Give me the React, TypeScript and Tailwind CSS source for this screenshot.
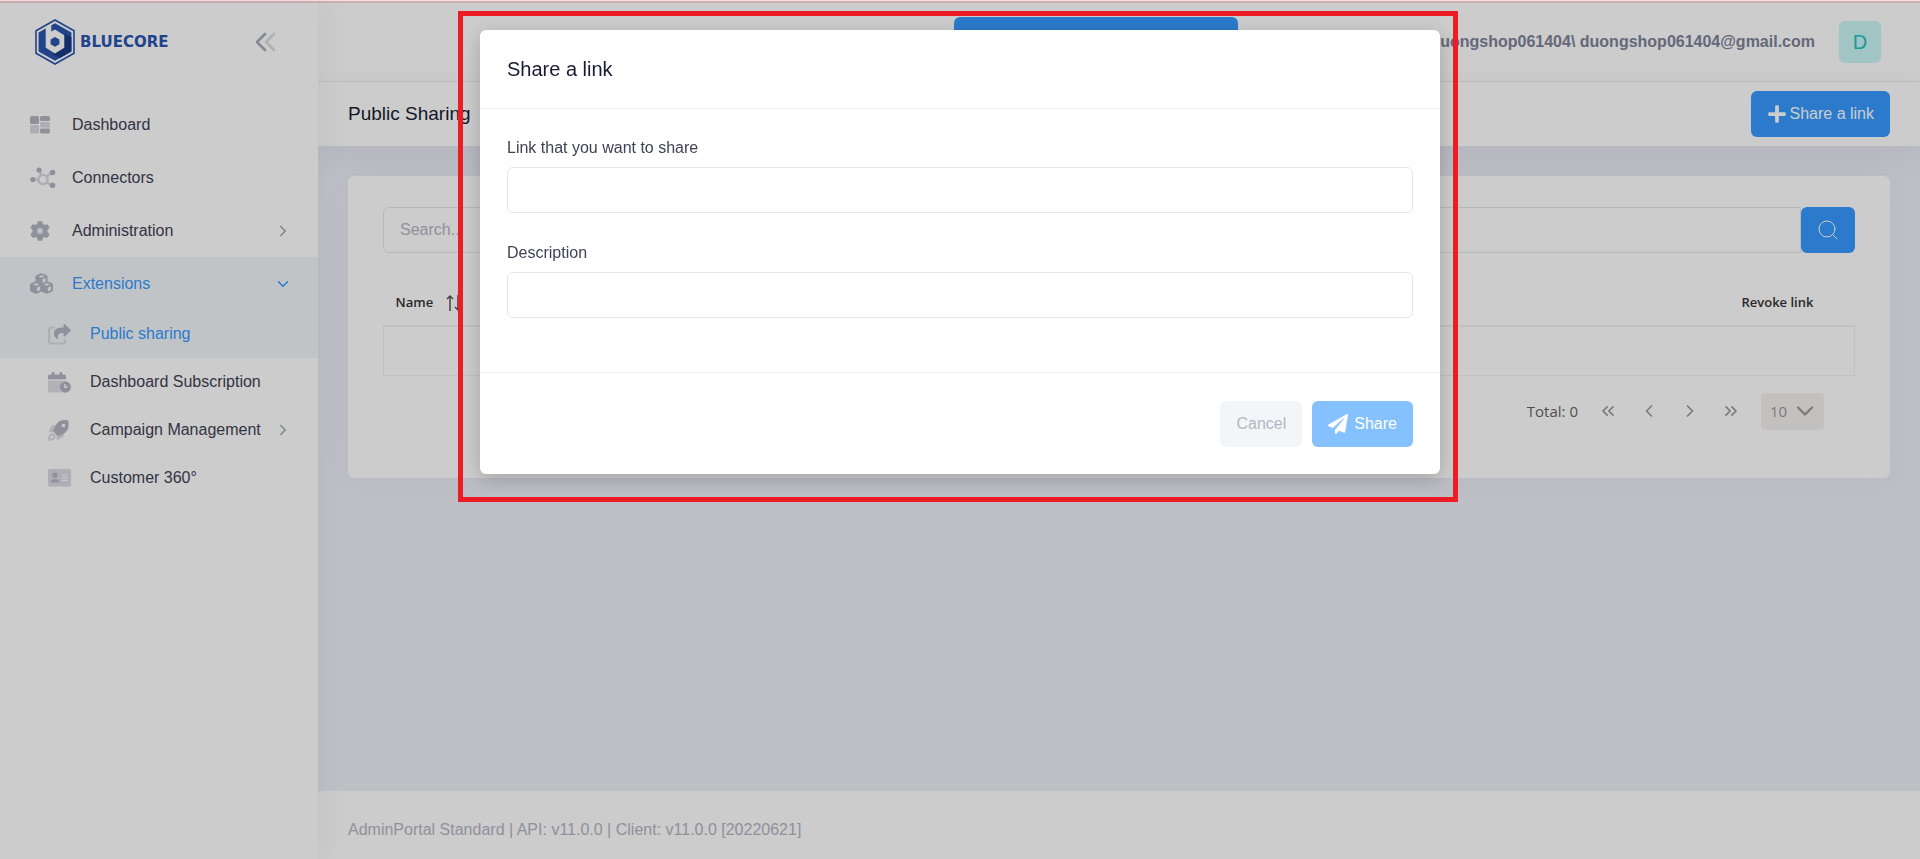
import React from 'react';
import {
  ChevronDown,
  ChevronLeft,
  ChevronRight,
  ChevronsLeft,
  ChevronsRight,
  Search,
} from 'lucide-react';
import { FaPaperPlane, FaPlus } from 'react-icons/fa';
import { FaCubes, FaGear } from 'react-icons/fa6';

const Logo: React.FC = () => (
  <a href="#" className="flex items-center gap-[5px] text-[#2a55b0]">
    <svg viewBox="0 0 40 46" className="h-[46px] w-10">
      <path d="M20 1 39 11.8v22.4L20 45 1 34.2V11.8Z" fill="none" stroke="#2a55ae" strokeWidth="1.6" />
      <path d="M20 4.200 36.400 13.600v18.800L20 41.800 3.600 32.400V13.600Z" fill="#2854ad" />
      <path d="m29 15 7.400 3v14.400L25 39l-8-4 12-7Z" fill="#183a85" />
      <path d="m10.700 8.600 5.600-3.200v7.200l3.700-2 9.300 5.600v12.600L20 34.600l-9.300-5.800Z" fill="#fff" />
      <path d="m20 18 4.400 2.500v4.800L20 27.800l-4.400-2.500v-4.800Z" fill="#2854ad" />
    </svg>
    <span className="font-['DejaVu_Sans',sans-serif] text-[15px] font-bold">BLUECORE</span>
  </a>
);

const DashboardIcon: React.FC = () => (
  <svg viewBox="0 0 20 18" className="h-[18px] w-5" fill="currentColor">
    <rect width="9" height="8" rx="1.5" />
    <rect x="10" width="10" height="5" rx="1.5" />
    <rect x="10" y="12.5" width="10" height="5" rx="1.5" />
    <g opacity=".5">
      <rect y="9" width="9" height="8.5" rx="1.5" />
      <rect x="10" y="6" width="10" height="5.5" rx="1.5" />
    </g>
  </svg>
);

const ConnectorsIcon: React.FC = () => (
  <svg viewBox="0 0 26 22" className="h-[22px] w-[26px]" fill="currentColor">
    <g opacity=".5" fill="none" stroke="currentColor" strokeWidth="2.4">
      <circle cx="13" cy="12.5" r="4.6" />
      <path d="m9 3 2.200 5.200M5 12.500h3.500M16.500 9.500 21 6.500M16.500 15.500l4 2" />
    </g>
    <circle cx="9" cy="3" r="2.6" />
    <circle cx="2.800" cy="12.500" r="2.6" />
    <circle cx="22.500" cy="5.500" r="2.8" />
    <circle cx="22.500" cy="18.300" r="2.8" />
  </svg>
);

const GearIcon: React.FC = () => (
  <span className="relative inline-flex">
    <FaGear className="size-5" />
    <svg viewBox="0 0 20 20" className="absolute inset-0 size-5">
      <circle cx="10" cy="10" r="3.2" fill="#dcdce3" />
      <circle cx="10" cy="10" r="1.4" fill="#fff" />
    </svg>
  </span>
);

const CubesIcon: React.FC = () => <FaCubes className="size-[23px]" />;

const ShareIcon: React.FC = () => (
  <svg viewBox="0 0 23 21" className="h-[21px] w-[23px]">
    <path
      d="M6.500 3.500H2.500A1.300 1.300 0 0 0 1.200 4.800v13.400a1.300 1.300 0 0 0 1.300 1.300h13a1.300 1.300 0 0 0 1.300-1.300V15"
      fill="none"
      stroke="currentColor"
      strokeWidth="2.2"
      opacity=".4"
    />
    <path
      d="M15.500.9c0-.8.900-1.100 1.400-.6l5.700 5.400c.4.400.4.900 0 1.300l-5.700 5.400c-.5.500-1.400.1-1.400-.6V9c-4.500 0-6.400 1.300-5.300 5.600.1.500-.5.900-.9.600C7.500 14 5.900 12 5.900 9.600c0-4.900 4.300-6 9.600-6Z"
      fill="currentColor"
    />
  </svg>
);

const CalendarIcon: React.FC = () => (
  <svg viewBox="0 0 23 21" className="h-[21px] w-[23px]" fill="currentColor">
    <path
      d="M0 8.500h18v0a6.600 6.600 0 0 0-6.700 6.500 6.600 6.600 0 0 0 2.200 5.500H1.800A1.800 1.800 0 0 1 0 18.700Z"
      opacity=".45"
    />
    <path d="M0 7.300V4.400c0-1 .8-1.800 1.800-1.800h2V.8c0-.5.300-.8.800-.8h1c.5 0 .8.300.8.800v1.800h5.200V.8c0-.5.300-.8.800-.8h1c.5 0 .8.300.8.800v1.800h2c1 0 1.800.8 1.800 1.800v2.900Z" />
    <path
      fillRule="evenodd"
      d="M17.200 9.300a5.700 5.700 0 1 0 0 11.400 5.700 5.700 0 0 0 0-11.400Zm-.9 2.800h1.400v2.500h1.900v1.400h-3.300Z"
    />
  </svg>
);

const RocketIcon: React.FC = () => (
  <svg viewBox="0 0 21 21" className="size-[21px]" fill="currentColor">
    <g opacity=".45">
      <path d="M8.300 5.200H4.800c-.6 0-1 .3-1.300.8L.7 11.200c-.3.500.1 1.100.7 1.100h4Z" />
      <path d="M15.800 12.200v3.700c0 .6-.3 1-.8 1.300l-5.100 2.700c-.6.300-1.200-.1-1.200-.7v-4Z" />
      <path
        fillRule="evenodd"
        d="M4 13.200c-2.700 0-4 3-3.900 7.500 4.500.1 7.600-1.200 7.600-3.900A3.700 3.700 0 0 0 4 13.200Zm.2 2.200c1 .1 1.500 1 1.100 1.800-.4.800-1.500 1.200-3 1.300 0-1.600.700-3.200 1.900-3.100Z"
      />
    </g>
    <path
      fillRule="evenodd"
      d="M20.300.9c-.1-.3-.3-.5-.6-.6-5.200-1-8.700.3-11.300 3.900-1.600 2.100-2.800 5.200-3.200 7.300l4.400 4.400c2.200-.4 5.200-1.600 7.400-3.200C20.600 10 21.200 6.100 20.300.9ZM15.500 7.300a1.800 1.800 0 1 1 0-3.600 1.800 1.800 0 0 1 0 3.600Z"
    />
  </svg>
);

const IdCardIcon: React.FC = () => (
  <svg viewBox="0 0 23 18" className="h-[18px] w-[23px]" fill="currentColor">
    <rect width="23" height="17.500" rx="2" opacity=".5" />
    <circle cx="7" cy="6.300" r="2.7" />
    <path d="M2.800 13.400c0-2 1.300-3.200 3-3.200h2.400c1.700 0 3 1.200 3 3.200Z" />
    <path d="M14 6h6M14 8.700h6M14 11.400h6" stroke="#fff" strokeWidth="1.1" />
  </svg>
);

interface MenuItem {
  label: string;
  icon: React.FC;
  arrow?: 'right' | 'down';
  active?: boolean;
}

const mainMenu: MenuItem[] = [
  { label: 'Dashboard', icon: DashboardIcon },
  { label: 'Connectors', icon: ConnectorsIcon },
  { label: 'Administration', icon: GearIcon, arrow: 'right' },
  { label: 'Extensions', icon: CubesIcon, arrow: 'down', active: true },
];

const subMenu: MenuItem[] = [
  { label: 'Public sharing', icon: ShareIcon, active: true },
  { label: 'Dashboard Subscription', icon: CalendarIcon },
  { label: 'Campaign Management', icon: RocketIcon, arrow: 'right' },
  { label: 'Customer 360°', icon: IdCardIcon },
];

const MenuRow: React.FC<{ item: MenuItem; sub?: boolean }> = ({ item, sub }) => (
  <li>
    <a
      href="#"
      className={`flex items-center pr-[26px] ${sub ? 'h-12 pl-12' : 'h-[53px] pl-[30px]'} ${
        item.active ? 'bg-[#f1f6f9] text-[#3699ff]' : 'text-[#3f4254]'
      }`}
    >
      <span className="flex w-[42px] text-[#b5b5c3]">
        <item.icon />
      </span>
      <span className="flex-1 whitespace-nowrap">{item.label}</span>
      {item.arrow === 'right' && <ChevronRight className="size-[18px] text-[#a1a5b7]" />}
      {item.arrow === 'down' && <ChevronDown className="size-[18px]" />}
    </a>
  </li>
);

const Sidebar: React.FC = () => (
  <aside className="z-10 flex w-[318px] shrink-0 flex-col bg-white shadow-[0_0_28px_rgba(82,63,105,0.08)]">
    <div className="flex h-[78px] items-center justify-between pr-10 pl-[35px]">
      <Logo />
      <button type="button" aria-label="Collapse menu" className="text-[#a9abbd]">
        <svg viewBox="0 0 24 24" className="size-6" fill="none" stroke="currentColor" strokeWidth="2.6" strokeLinecap="round" strokeLinejoin="round">
          <path d="m11 4-8 8 8 8" />
          <path d="m20 4-8 8 8 8" opacity=".4" />
        </svg>
      </button>
    </div>
    <ul className="mt-[17px]">
      {mainMenu.map((item) => (
        <MenuRow key={item.label} item={item} />
      ))}
    </ul>
    <ul>
      {subMenu.map((item) => (
        <MenuRow key={item.label} item={item} sub />
      ))}
    </ul>
  </aside>
);

const Topbar: React.FC = () => (
  <header className="flex h-[79px] items-start justify-end border-b border-[#ebedf3] bg-white pr-[39px]">
    <button
      type="button"
      aria-label="Open workspace"
      className="mt-[14px] mr-auto ml-[636px] h-[46px] w-[284px] rounded-md bg-[#3699ff]"
    />
    <div className="mt-[18px] flex items-center gap-6">
      <span className="font-bold text-[#7e8299]">duongshop061404\ duongshop061404@gmail.com</span>
      <span className="flex size-[42px] items-center justify-center rounded-md bg-[#c9f7f5] text-xl text-[#1bc5bd]">
        D
      </span>
    </div>
  </header>
);

const Subheader: React.FC = () => (
  <div className="flex h-16 items-center justify-between bg-white px-[30px] shadow-[0_10px_30px_rgba(82,63,105,0.08)]">
    <h1 className="text-[19px] text-[#181c32]">Public Sharing</h1>
    <button
      type="button"
      className="flex h-[46px] items-center gap-[3px] rounded-md bg-[#3699ff] px-4 text-white"
    >
      <FaPlus className="size-5" />
      Share a link
    </button>
  </div>
);

const Pagination: React.FC = () => (
  <div className="mt-[17px] flex items-center justify-end pr-[31px] text-[#999]">
    <span className="mr-5 font-['Open_Sans',sans-serif] text-[15px] text-[#666]">Total: 0</span>
    <div className="flex items-center gap-[21px]">
      <button type="button" aria-label="First page"><ChevronsLeft className="size-5" /></button>
      <button type="button" aria-label="Previous page"><ChevronLeft className="size-5" /></button>
      <button type="button" aria-label="Next page"><ChevronRight className="size-5" /></button>
      <button type="button" aria-label="Last page"><ChevronsRight className="size-5" /></button>
    </div>
    <div className="relative ml-5">
      <select
        aria-label="Rows per page"
        className="h-[37px] w-[63px] appearance-none rounded-sm bg-[#f3f2f0] pl-[9px] font-['Open_Sans',sans-serif] text-[15px]"
      >
        <option>10</option>
      </select>
      <ChevronDown className="pointer-events-none absolute top-1 right-[5px] size-7" />
    </div>
  </div>
);

const LinksCard: React.FC = () => (
  <section className="rounded-md bg-white px-[35px] pt-[31px] pb-12 shadow-[0_0_30px_rgba(82,63,105,0.05)]">
    <form className="flex">
      <input
        type="text"
        aria-label="Search"
        placeholder="Search..."
        className="h-[46px] flex-1 rounded-l-md border border-[#e4e6ef] px-4 placeholder:text-[#b5b5c3]"
      />
      <button
        type="button"
        aria-label="Run search"
        className="flex h-[46px] w-[54px] items-center justify-center rounded-md bg-[#3699ff] text-white"
      >
        <Search className="size-6" strokeWidth={1} />
      </button>
    </form>

    <table className="mt-7 w-full font-['Open_Sans',sans-serif] text-[13px]">
      <thead>
        <tr className="h-[45px] text-left text-[#333]">
          <th className="pl-3 font-semibold">
            <span className="flex items-center gap-3">
              Name
              <svg viewBox="0 0 20 18" className="h-[18px] w-5" fill="none" stroke="#555" strokeWidth="1.5">
                <path d="M5 17V2M2 5 5 2 8 5M13 1v15M10 13l3 3 3-3" />
              </svg>
            </span>
          </th>
          <th className="w-[113px] font-semibold">Revoke link</th>
        </tr>
      </thead>
      <tbody>
        <tr className="h-[49px] border border-t-2 border-[#f0f0f2]">
          <td colSpan={2} />
        </tr>
      </tbody>
    </table>

    <Pagination />
  </section>
);

const ShareDialog: React.FC = () => (
  <div className="fixed inset-x-0 top-px bottom-0 z-20 flex items-start justify-center bg-black/20 pt-[29px]">
    <div className="relative w-full max-w-[960px]">
      <div
        role="dialog"
        aria-labelledby="share-title"
        className="rounded-md bg-white shadow-[0_5px_20px_rgba(0,0,0,0.2)]"
      >
        <h2
          id="share-title"
          className="flex h-[79px] items-center border-b border-[#ebedf3] px-[27px] text-xl text-[#181c32]"
        >
          Share a link
        </h2>

        <div className="flex flex-col gap-7 px-[27px] pt-[27px] pb-[54px]">
          <div className="flex flex-col gap-[7px]">
            <label htmlFor="link" className="text-[#3f4254]">Link that you want to share</label>
            <input id="link" type="text" className="h-[46px] rounded-md border border-[#e4e6ef] px-4" />
          </div>
          <div className="flex flex-col gap-[7px]">
            <label htmlFor="description" className="text-[#3f4254]">Description</label>
            <input id="description" type="text" className="h-[46px] rounded-md border border-[#e4e6ef] px-4" />
          </div>
        </div>

        <div className="flex justify-end gap-[10px] border-t border-[#ebedf3] px-[27px] pt-7 pb-[27px]">
          <button type="button" className="h-[46px] rounded-md bg-[#f3f6f9] px-4 text-[#b5b5c3]">
            Cancel
          </button>
          <button
            type="button"
            className="flex h-[46px] items-center gap-[6px] rounded-md bg-[#86c1ff] px-4 text-white"
          >
            <FaPaperPlane className="size-5" />
            Share
          </button>
        </div>
      </div>

      {/* Highlight frame around the dialog */}
      <div className="pointer-events-none absolute -top-[19px] -right-[18px] -bottom-7 -left-[22px] border-5 border-[#ed1c24]" />
    </div>
  </div>
);

const App: React.FC = () => (
  <div className="flex min-h-screen border-t-3 border-[#fbdde0] bg-[#eef0f8] font-['Liberation_Sans',Arial,sans-serif] text-base">
    <Sidebar />
    <div className="flex min-w-0 flex-1 flex-col">
      <Topbar />
      <Subheader />
      <main className="flex-1 p-[30px]">
        <LinksCard />
      </main>
      <footer className="flex h-[68px] items-center bg-white px-[30px] pt-[10px] text-[#b5b5c3]">
        AdminPortal Standard | API: v11.0.0 | Client: v11.0.0 [20220621]
      </footer>
    </div>
    <ShareDialog />
  </div>
);

export default App;
